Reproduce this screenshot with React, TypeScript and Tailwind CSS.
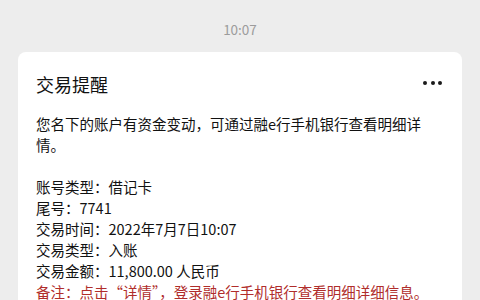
export default function App() {
  const details = [
    "账号类型：借记卡",
    "尾号：7741",
    "交易时间：2022年7月7日10:07",
    "交易类型：入账",
    "交易金额：11,800.00 人民币",
  ];

  return (
    <div
      className="min-h-screen bg-[#ededed] px-[18px] pt-[19px] pb-6"
      style={{ fontFamily: '"Noto Sans CJK SC", "Noto Sans", sans-serif' }}
    >
      {/* Timestamp */}
      <div className="text-center text-[13.5px] leading-[20px] text-[#9c9c9c]">10:07</div>

      {/* Message card */}
      <div className="mt-[13px] rounded-[8px] bg-white pl-[18px] pr-[20px] pt-[20px] pb-4">
        <div className="flex items-center justify-between">
          <h2 className="text-[18px] leading-[24px] text-[#111]">交易提醒</h2>
          <div className="flex items-center gap-[3.5px] -mt-[3px]">
            <span className="h-[4px] w-[4px] rounded-full bg-[#1a1a1a]" />
            <span className="h-[4px] w-[4px] rounded-full bg-[#1a1a1a]" />
            <span className="h-[4px] w-[4px] rounded-full bg-[#1a1a1a]" />
          </div>
        </div>

        <div className="mt-[17px] text-[14.5px] leading-[21px] text-[#111]">
          <p>您名下的账户有资金变动，可通过融e行手机银行查看明细详情。</p>
          <div className="mt-[21px]">
            {details.map((line) => (
              <p key={line}>{line}</p>
            ))}
            <p className="text-[#b02d2b]">备注：点击“详情”，登录融e行手机银行查看明细详细信息。</p>
          </div>
        </div>
      </div>
    </div>
  );
}
